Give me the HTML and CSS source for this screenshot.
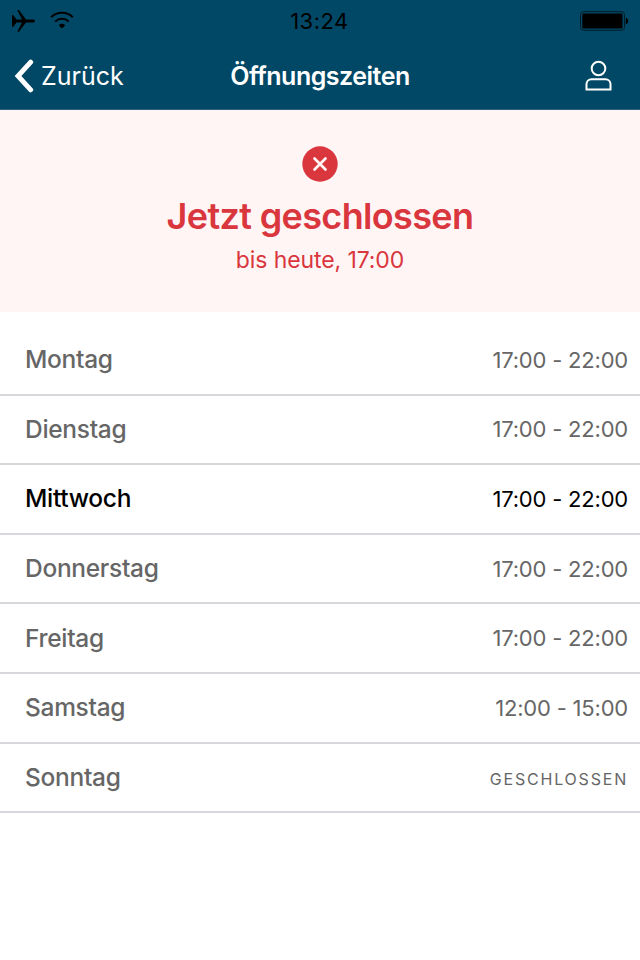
FILE: index.html
```html
<!DOCTYPE html>
<html lang="de">
<head>
    <meta charset="utf-8">
    <title>Öffnungszeiten</title>
    <link rel="stylesheet" href="styles.css">
</head>
<body>
    <header class="header">
        <div class="statusbar">
            <div class="status-left">
                <svg class="plane" width="24" height="24" viewBox="0 0 24 24"><path d="M1 6h1.200l3.300 4.400H11L6.300 1h1.600L15 10.400h7c1.400 0 2 .8 2 1.500s-.6 1.500-2 1.500h-7L7.900 22.800H6.300L11 13.400H5.500L2.200 17.800H1z"/></svg>
                <svg class="wifi" width="24" height="18" viewBox="0 0 24 18" fill="none" stroke="#000" stroke-width="2"><path d="M1.200 6.200a15.600 15.600 0 0 1 21.600 0M5.200 10.600a9.800 9.800 0 0 1 13.600 0"/><path d="M12 17.500l-3.300-3.200a5 5 0 0 1 6.600 0z" fill="#000" stroke="none"/></svg>
            </div>
            <span class="clock">13:24</span>
            <div class="status-right">
                <svg width="50" height="20" viewBox="0 0 50 20"><rect x="1.500" y=".7" width="44" height="18.600" rx="3" fill="none" stroke="#001c29" stroke-width="1"/><rect x="3.300" y="2.500" width="40.200" height="15" rx="1.200"/><path d="M46.800 6.800c1.700.5 2.400 1.700 2.400 3.200s-.7 2.700-2.400 3.200z"/></svg>
            </div>
        </div>
        <nav class="navbar">
            <a class="back">
                <svg width="20" height="34" viewBox="0 0 20 34" fill="none" stroke="#fff" stroke-width="4.900" stroke-linecap="round" stroke-linejoin="miter"><path d="M16.700 3.200L4 17l12.700 13.800"/></svg>
                <span>Zurück</span>
            </a>
            <h1 class="title">Öffnungszeiten</h1>
            <a class="profile">
                <svg width="28" height="32" viewBox="0 0 28 32" fill="none" stroke="#fff" stroke-width="2"><circle cx="14.500" cy="8.500" r="6.800"/><path d="M2.500 29.600v-5.300a5 5 0 0 1 5-5h14a5 5 0 0 1 5 5v5.300z"/></svg>
            </a>
        </nav>
    </header>

    <section class="status">
        <svg class="status-icon" width="36" height="36" viewBox="0 0 36 36"><circle cx="18" cy="18" r="17.700" fill="#d9363e"/><path d="M12.500 12.500l11 11M23.500 12.500l-11 11" stroke="#fff5f5" stroke-width="2.700" stroke-linecap="round"/></svg>
        <h2 class="status-title">Jetzt geschlossen</h2>
        <p class="status-text">bis heute, 17:00</p>
    </section>

    <ul class="hours">
        <li class="row"><span class="day">Montag</span><span class="time">17:00 - 22:00</span></li>
        <li class="row"><span class="day">Dienstag</span><span class="time">17:00 - 22:00</span></li>
        <li class="row today"><span class="day">Mittwoch</span><span class="time">17:00 - 22:00</span></li>
        <li class="row"><span class="day">Donnerstag</span><span class="time">17:00 - 22:00</span></li>
        <li class="row"><span class="day">Freitag</span><span class="time">17:00 - 22:00</span></li>
        <li class="row"><span class="day">Samstag</span><span class="time">12:00 - 15:00</span></li>
        <li class="row"><span class="day">Sonntag</span><span class="time closed">Geschlossen</span></li>
    </ul>
</body>
</html>
```

FILE: styles.css
```css
* {
    box-sizing: border-box;
}

body {
    margin: 0;
    background-color: #fff;
    font-family: Inter, "Liberation Sans", sans-serif;
    color: #666;
}

h1, h2, p, ul {
    margin: 0;
    padding: 0;
}

svg {
    display: block;
}

.header {
    height: 110px;
    background-color: #004865;
    border-bottom: 1px solid #2f6178;
}

.statusbar {
    display: grid;
    grid-template-columns: 1fr auto 1fr;
    align-items: center;
    height: 42px;
    padding: 0 11px 0 12px;
}

.status-left {
    display: flex;
    gap: 14px;
    margin-left: -1px;
}

.wifi {
    margin: 2px 0 0 1px;
}

.clock {
    font-size: 22px;
    letter-spacing: 0.5px;
    margin-right: 2px;
    color: #000;
}

.status-right {
    display: flex;
    justify-content: flex-end;
}

.navbar {
    display: grid;
    grid-template-columns: 1fr auto 1fr;
    align-items: center;
    height: 67px;
    padding: 0 14px;
    color: #fff;
}

.back {
    display: flex;
    align-items: center;
    gap: 7px;
    font-size: 25px;
}

.title {
    font-size: 25px;
    font-weight: 600;
    letter-spacing: -0.5px;
}

.profile {
    display: flex;
    justify-content: flex-end;
    padding-right: 14px;
}

.status {
    display: flex;
    flex-direction: column;
    align-items: center;
    height: 202px;
    padding-top: 36px;
    background-color: #fff5f5;
    color: #d9363e;
}

.status-title {
    margin-top: 11px;
    font-size: 36px;
    font-weight: 600;
    letter-spacing: -0.65px;
    line-height: 46px;
}

.status-text {
    margin-top: 5px;
    font-size: 23px;
    letter-spacing: -0.1px;
    line-height: 32px;
}

.hours {
    padding-top: 14px;
    list-style: none;
}

.row {
    display: flex;
    justify-content: space-between;
    align-items: center;
    height: 69.6px;
    padding: 0 12px 0 25px;
    border-bottom: 2px solid #d8d8dc;
}

.day {
    margin-bottom: 1px;
    font-size: 24.5px;
    font-weight: 500;
    letter-spacing: -0.3px;
}

.time {
    font-size: 22px;
    letter-spacing: -0.2px;
}

.today {
    color: #000;
}

.closed {
    margin-top: 4px;
    font-size: 16px;
    letter-spacing: 1.8px;
    text-transform: uppercase;
}
```
